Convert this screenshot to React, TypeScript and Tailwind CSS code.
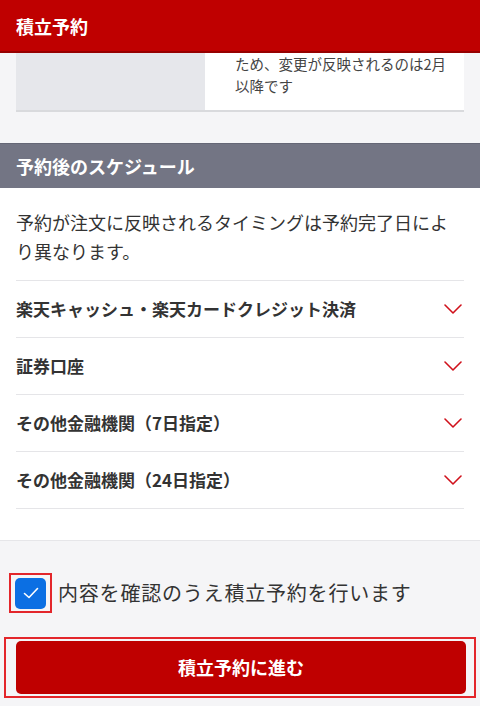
import { useState } from "react";

const FONT = '"Noto Sans CJK JP", "Noto Sans", sans-serif';

const rows = [
  "楽天キャッシュ・楽天カードクレジット決済",
  "証券口座",
  "その他金融機関（7日指定）",
  "その他金融機関（24日指定）",
];

const Chevron = () => (
  <svg width="18" height="10" viewBox="0 0 18 10" fill="none" className="shrink-0">
    <path d="M1 1l8 8 8-8" stroke="#d0111b" strokeWidth="1.6" strokeLinecap="round" strokeLinejoin="round" />
  </svg>
);

export default function App() {
  const [checked, setChecked] = useState(true);

  return (
    <div className="w-[480px] h-[706px] overflow-hidden bg-[#f5f5f7] text-[#333]" style={{ fontFamily: FONT }}>
      {/* header */}
      <div className="h-[53px] bg-[#bf0000] border-b-2 border-[#960000] flex items-center px-4">
        <h1 className="text-white text-[18px] font-bold leading-none">積立予約</h1>
      </div>

      {/* table tail */}
      <div className="px-4">
        <div className="flex border-b-2 border-[#d9dadd]">
          <div className="w-[189px] bg-[#e6e7eb]" />
          <div className="flex-1 bg-white pl-[30px] pr-3 pb-[13px] text-[14.5px] leading-[22px] text-[#444]">
            ため、変更が反映されるのは2月
            <br />
            以降です
          </div>
        </div>
      </div>

      {/* schedule */}
      <div className="mt-[31px] h-[45px] bg-[#737584] border-t border-[#656776] flex items-center px-4">
        <h2 className="text-white text-[18px] font-bold leading-none">予約後のスケジュール</h2>
      </div>
      <div className="bg-white px-4 pt-5 pb-[31px] border-b border-[#e6e6e9]">
        <p className="text-[18px] leading-[29px] text-[#333]">
          予約が注文に反映されるタイミングは予約完了日により異なります。
        </p>
        <div className="mt-[14px] border-t border-[#e5e5e8]">
          {rows.map((r) => (
            <div key={r} className="h-[57px] border-b border-[#e5e5e8] flex items-center justify-between pr-[2px]">
              <span className="text-[17px] font-bold text-[#333]">{r}</span>
              <Chevron />
            </div>
          ))}
        </div>
      </div>

      {/* agreement */}
      <div className="px-[9px] pt-[32px]">
        <label className="flex items-center gap-[6px] cursor-pointer">
          <span className="border-2 border-[#e3262b] w-[43px] h-[40px] flex items-center justify-center">
            <button
              type="button"
              onClick={() => setChecked(!checked)}
              className={`w-[31px] h-[31px] rounded-[5px] flex items-center justify-center ${checked ? "bg-[#0b6fe3]" : "bg-white border border-[#999]"}`}
            >
              {checked && (
                <svg width="16" height="12" viewBox="0 0 16 12" fill="none">
                  <path d="M1.5 6.5l4.5 4 8.5-9" stroke="white" strokeWidth="1.6" strokeLinecap="round" strokeLinejoin="round" />
                </svg>
              )}
            </button>
          </span>
          <span className="text-[20px] tracking-[0.8px] text-[#333]">内容を確認のうえ積立予約を行います</span>
        </label>
      </div>

      <div className="mt-[24px] mx-[4px] border-2 border-[#e3262b] p-[2px] pl-[10px] pr-[8px]">
        <button
          type="button"
          className="w-full h-[53px] rounded-[5px] bg-[#bf0000] text-white text-[18px] font-bold"
        >
          積立予約に進む
        </button>
      </div>
    </div>
  );
}
